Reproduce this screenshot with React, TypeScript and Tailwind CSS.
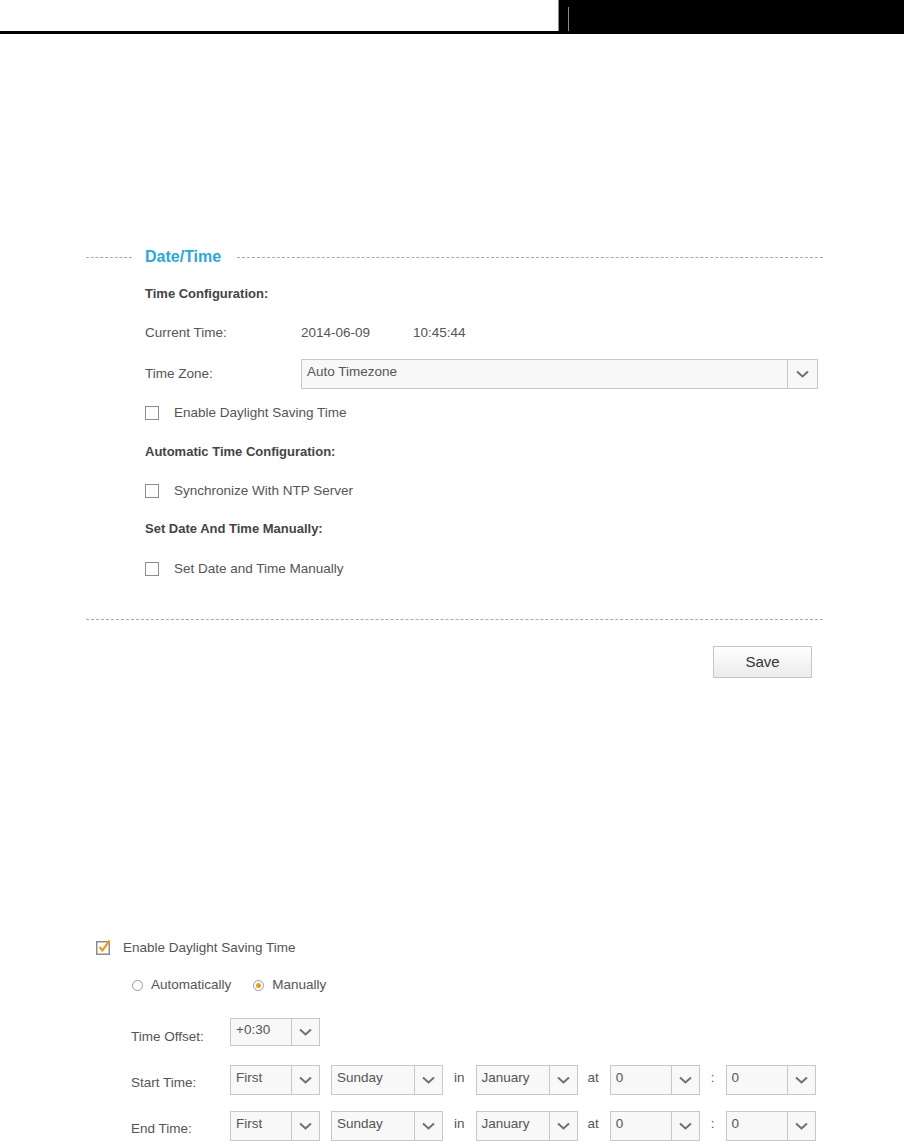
import React from "react";

function Chevron() {
  return (
    <svg width="13" height="8" viewBox="0 0 13 8">
      <path d="M1 1.5l5.5 5 5.5-5" fill="none" stroke="#707070" strokeWidth="2" />
    </svg>
  );
}

function Select({ value, className, arrow = "w-[28px]" }: { value: string; className: string; arrow?: string }) {
  return (
    <div className={`flex shrink-0 border border-[#c8c8c8] bg-[#f8f8f8] ${className}`}>
      <div className="flex flex-1 items-center pb-[4px] pl-[5px] text-[13.5px] text-[#555]">{value}</div>
      <div className={`flex items-center justify-center border-l border-[#c8c8c8] ${arrow}`}>
        <Chevron />
      </div>
    </div>
  );
}

function Checkbox({ label }: { label: string }) {
  return (
    <div className="flex h-[20px] items-center">
      <span className="h-[14px] w-[14px] border-[1.5px] border-[#8c8c8c] bg-white" />
      <span className="ml-[15px] text-[13.5px] text-[#555]">{label}</span>
    </div>
  );
}

function Radio({ label, checked }: { label: string; checked?: boolean }) {
  return (
    <div className="flex items-center">
      <span className="flex h-[11px] w-[11px] items-center justify-center rounded-full border border-[#9a9a9a] bg-white">
        {checked ? <span className="h-[5px] w-[5px] rounded-full bg-[#f39c12]" /> : null}
      </span>
      <span className="ml-[8px] text-[13.5px] text-[#555]">{label}</span>
    </div>
  );
}

function Heading({ children }: { children: React.ReactNode }) {
  return <div className="flex h-[20px] items-center text-[13px] font-bold text-[#444]">{children}</div>;
}

export default function App() {
  return (
    <div className="min-h-[1146px] w-[904px] bg-white font-['Liberation_Sans',Arial,sans-serif]">
      {/* top banner */}
      <div className="flex h-[31px]">
        <div className="w-[558px] bg-white" />
        <div className="flex flex-1 bg-black">
          <div className="w-[1px] bg-[#8a8a8a]" />
          <div className="ml-[9px] mt-[7px] w-[1px] bg-[#8a8a8a]" />
        </div>
      </div>
      <div className="h-[3px] bg-black" />

      {/* Date/Time panel */}
      <div className="ml-[86px] mt-[213px] w-[737px]">
        <div className="flex h-[20px] items-center">
          <div className="w-[46px] border-t border-dashed border-[#aaa]" />
          <div className="ml-[13px] text-[16px] font-bold text-[#2aa7e0]">Date/Time</div>
          <div className="ml-[16px] flex-1 border-t border-dashed border-[#aaa]" />
        </div>

        <div className="pl-[59px]">
          <div className="mt-[17px]">
            <Heading>Time Configuration:</Heading>
          </div>
          <div className="mt-[19px] flex h-[20px] items-center text-[13.5px] text-[#555]">
            <span className="w-[156px]">Current Time:</span>
            <span className="w-[112px]">2014-06-09</span>
            <span>10:45:44</span>
          </div>
          <div className="mt-[16px] flex items-center">
            <span className="w-[156px] text-[13.5px] text-[#555]">Time Zone:</span>
            <Select value="Auto Timezone" className="h-[30px] w-[517px]" arrow="w-[30px]" />
          </div>
          <div className="mt-[14px]">
            <Checkbox label="Enable Daylight Saving Time" />
          </div>
          <div className="mt-[19px]">
            <Heading>Automatic Time Configuration:</Heading>
          </div>
          <div className="mt-[19px]">
            <Checkbox label="Synchronize With NTP Server" />
          </div>
          <div className="mt-[18px]">
            <Heading>Set Date And Time Manually:</Heading>
          </div>
          <div className="mt-[20px]">
            <Checkbox label="Set Date and Time Manually" />
          </div>
        </div>

        <div className="mt-[40px] border-t border-dashed border-[#aaa]" />
        <div className="mt-[26px] flex justify-end pr-[11px]">
          <button className="h-[32px] w-[99px] border border-[#c6c6c6] bg-gradient-to-b from-white to-[#ebebeb] text-[15px] text-[#333]">
            Save
          </button>
        </div>
      </div>

      {/* expanded daylight saving */}
      <div className="ml-[96px] mt-[260px]">
        <div className="flex h-[20px] items-center">
          <svg width="16" height="16" viewBox="0 0 16 16" className="-mt-[2px]">
            <rect x="0.75" y="2.75" width="12.5" height="12.5" fill="white" stroke="#8c8c8c" strokeWidth="1.5" />
            <path d="M3.5 8l3 3.5 7-10" fill="none" stroke="#f39c12" strokeWidth="2.2" />
          </svg>
          <span className="ml-[11px] text-[13.5px] text-[#555]">Enable Daylight Saving Time</span>
        </div>

        <div className="ml-[36px] mt-[17px] flex h-[20px] items-center gap-[22px]">
          <Radio label="Automatically" />
          <Radio label="Manually" checked />
        </div>

        <div className="ml-[35px] mt-[21px] flex items-center">
          <span className="w-[99px] pt-[11px] text-[13.5px] text-[#555]">Time Offset:</span>
          <Select value="+0:30" className="h-[28px] w-[90px]" />
        </div>

        {["Start Time:", "End Time:"].map((label, i) => (
          <div key={label} className={`ml-[35px] flex items-center text-[13.5px] text-[#555] ${i === 0 ? "mt-[18px]" : "mt-[16px]"}`}>
            <span className="w-[99px] pt-[5px]">{label}</span>
            <Select value="First" className="h-[30px] w-[90px]" />
            <Select value="Sunday" className="ml-[11px] h-[30px] w-[112px]" />
            <span className="ml-[11px] pb-[4px]">in</span>
            <Select value="January" className="ml-[11px] h-[30px] w-[102px]" />
            <span className="ml-[10px] pb-[4px]">at</span>
            <Select value="0" className="ml-[11px] h-[30px] w-[90px]" />
            <span className="ml-[11px] pb-[4px]">:</span>
            <Select value="0" className="ml-[11px] h-[30px] w-[90px]" />
          </div>
        ))}
      </div>
    </div>
  );
}
